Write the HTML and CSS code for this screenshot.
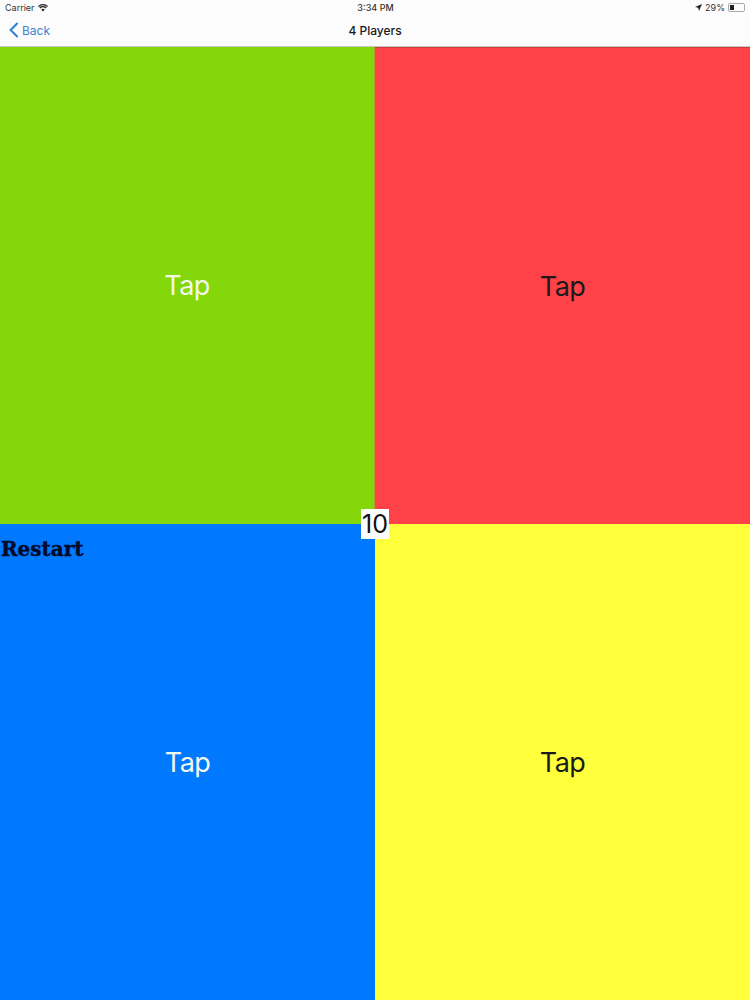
FILE: index.html
```html
<!DOCTYPE html>
<html lang="en">
<head>
<meta charset="utf-8">
<title>4 Players</title>
<link rel="stylesheet" href="styles.css">
</head>
<body>
<div class="app">
  <header class="top">
    <div class="status">
      <div class="status-side">
        <span>Carrier</span>
        <svg class="wifi" viewBox="0 0 12 9" width="10" height="8"><path d="M6 8.6 3.9 6.3a3 3 0 0 1 4.2 0zM2.9 5.2 1.6 3.8a6.3 6.3 0 0 1 8.8 0L9.1 5.2a4.4 4.4 0 0 0-6.2 0zM1 3.2 0 2.1a8.7 8.7 0 0 1 12 0L11 3.2a7.2 7.2 0 0 0-10 0z" fill="#222"/></svg>
      </div>
      <div class="clock">3:34 PM</div>
      <div class="status-side status-right">
        <svg class="arrow" viewBox="0 0 8 8" width="7" height="7"><path d="M8 0 0 3.4l3.6.9L4.6 8z" fill="#222"/></svg>
        <span>29%</span>
        <div class="battery"><div class="battery-fill"></div></div>
      </div>
    </div>
    <nav class="nav">
      <div class="back">
        <svg class="chevron" viewBox="0 0 10 16" width="10" height="16"><path d="M8.6 1 1.6 8l7 7" fill="none" stroke="#2f7fd6" stroke-width="2"/></svg>
        <span>Back</span>
      </div>
      <div class="title">4 Players</div>
    </nav>
  </header>
  <main class="board">
    <div class="cell green light">Tap</div>
    <div class="cell red">Tap</div>
    <div class="cell blue light">Tap<div class="restart">Restart</div></div>
    <div class="cell yellow">Tap</div>
    <div class="count">10</div>
  </main>
</div>
</body>
</html>
```
FILE: styles.css
```css
html, body {
  margin: 0;
  padding: 0;
}
body {
  font-family: Inter, "Liberation Sans", sans-serif;
  background: #fff;
}
.app {
  width: 750px;
  height: 1000px;
  display: flex;
  flex-direction: column;
  overflow: hidden;
}
.top {
  height: 46px;
  background: #fcfcfc;
  border-bottom: 1px solid #c9c9c0;
  display: flex;
  flex-direction: column;
}
.status {
  height: 15px;
  padding: 0 5px;
  display: flex;
  justify-content: space-between;
  align-items: center;
  font-size: 9px;
  color: #333;
  position: relative;
}
.status-side {
  display: flex;
  align-items: center;
  gap: 3px;
}
.clock {
  position: absolute;
  left: 1px;
  right: 0;
  text-align: center;
  font-size: 9px;
  font-weight: 500;
}
.battery {
  width: 13px;
  height: 5px;
  border: 1px solid #aaa;
  border-radius: 2px;
  padding: 1px;
  display: flex;
}
.battery-fill {
  width: 4px;
  background: #222;
}
.nav {
  flex: 1;
  display: flex;
  align-items: center;
  justify-content: center;
  position: relative;
}
.back {
  position: absolute;
  left: 9px;
  top: 7px;
  display: flex;
  align-items: center;
  gap: 3px;
  color: #3b83d0;
  font-size: 12px;
}
.title {
  font-size: 12px;
  font-weight: 500;
  color: #1a1a1a;
}
.board {
  flex: 1;
  display: grid;
  grid-template-columns: 1fr 1fr;
  grid-template-rows: 477px 476px;
  position: relative;
}
.cell {
  box-sizing: border-box;
  display: flex;
  align-items: center;
  justify-content: center;
  font-size: 27px;
  letter-spacing: -0.6px;
  color: #1a1a1a;
  position: relative;
}
.light {
  color: #f2f8ea;
}
.green {
  background: #83d70b;
  border-right: 1px solid #b0a030;
}
.red {
  background: #ff4148;
  border-top: 1px solid #d23a42;
}
.blue {
  background: #0079ff;
}
.yellow {
  background: #ffff3c;
}
.restart {
  position: absolute;
  left: 1px;
  top: 14px;
  font-family: "DejaVu Serif", serif;
  font-weight: 700;
  font-size: 20px;
  letter-spacing: 0;
  line-height: 22px;
  color: #020b2c;
  -webkit-text-stroke: 0.4px #020b2c;
}
.count {
  position: absolute;
  left: 361px;
  top: 462px;
  width: 28px;
  height: 30px;
  background: #fff;
  color: #111;
  font-size: 25px;
  display: flex;
  align-items: center;
  justify-content: center;
}
```
